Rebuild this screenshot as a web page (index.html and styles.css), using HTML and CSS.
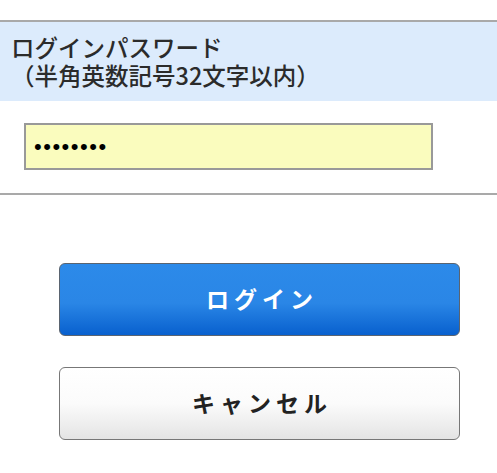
FILE: index.html
```html
<!DOCTYPE html>
<html lang="ja">
<head>
<meta charset="utf-8">
<link rel="stylesheet" href="styles.css">
</head>
<body>
<div class="form">
  <div class="label">
    <div class="label-line">ログインパスワード</div>
    <div class="label-line">（半角英数記号32文字以内）</div>
  </div>
  <div class="field">
    <input class="pw" type="password" value="password">
  </div>
  <div class="actions">
    <button class="btn btn-primary" type="button">ログイン</button>
    <button class="btn btn-default" type="button">キャンセル</button>
  </div>
</div>
</body>
</html>
```

FILE: styles.css
```css
html, body {
  margin: 0;
  padding: 0;
  background: #fff;
}
body {
  font-family: "Noto Sans CJK JP", "Noto Sans", sans-serif;
  padding-top: 20px;
}
.form {
  border-top: 2px solid #a9a9a9;
}
.label {
  background: #dcebfc;
  color: #2b2b2b;
  font-size: 23.5px;
  font-weight: 500;
  padding: 11px 11px 12px;
  height: 56px;
}
.label-line {
  height: 28px;
  line-height: 28px;
  white-space: nowrap;
}
.field {
  padding: 22px 0 23px 24px;
  border-bottom: 2px solid #a9a9a9;
}
.pw {
  display: block;
  box-sizing: border-box;
  width: 409px;
  height: 47px;
  margin: 0;
  padding: 0 8px;
  border: 2px solid #999;
  background: #fafcbe;
  font-family: "Liberation Sans", sans-serif;
  font-size: 22px;
  letter-spacing: 1.5px;
  color: #000;
  outline: none;
}
.actions {
  display: flex;
  flex-direction: column;
  gap: 31px;
  padding: 68px 0 0 59px;
}
.btn {
  box-sizing: border-box;
  width: 401px;
  height: 73px;
  padding: 0 0 3px;
  border-radius: 6px;
  font-family: "Noto Sans CJK JP", sans-serif;
  font-size: 23px;
  font-weight: bold;
  letter-spacing: 5px;
  text-indent: 5px;
  cursor: pointer;
}
.btn-primary {
  border: 1px solid #5a6470;
  color: #fff;
  background: linear-gradient(to bottom, #2c8ae9 0%, #2a86e6 55%, #0860ce 100%);
}
.btn-default {
  border: 1px solid #777;
  color: #222;
  background: linear-gradient(to bottom, #ffffff 0%, #fbfbfb 50%, #e4e4e4 100%);
}
```
